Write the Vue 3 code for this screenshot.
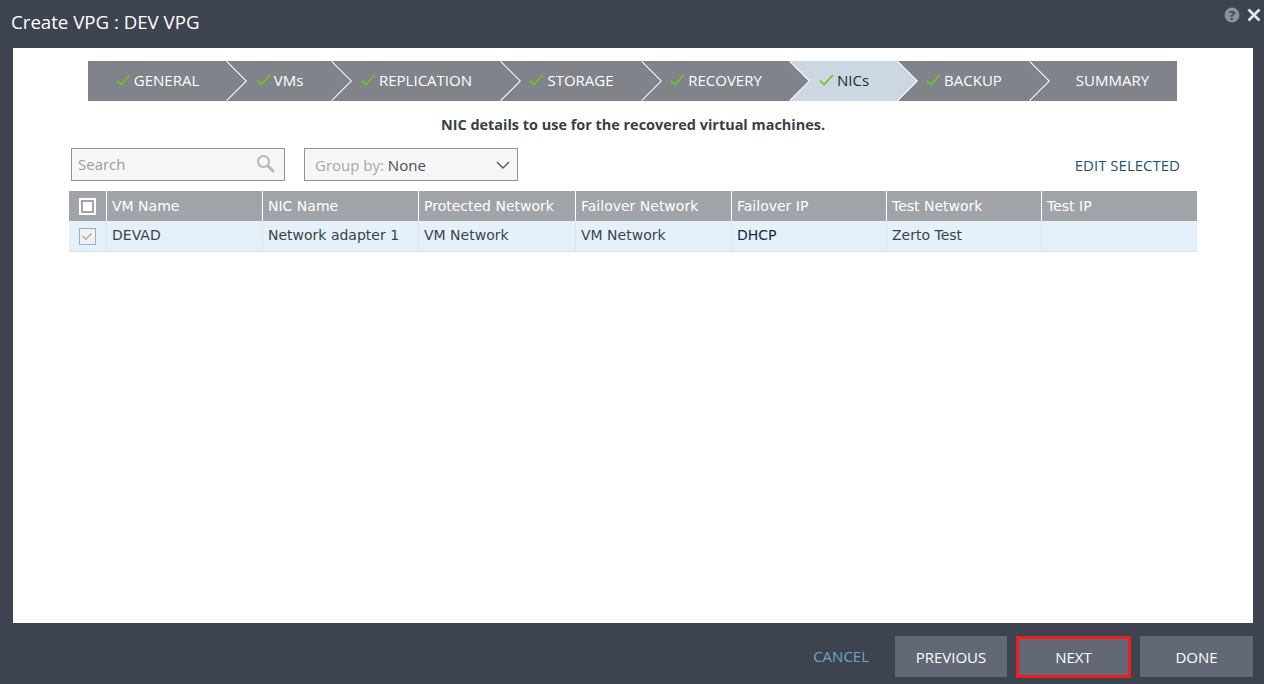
<script setup>
const steps = [
  { label: 'GENERAL', w: 139, done: true },
  { label: 'VMs', w: 105, done: true },
  { label: 'REPLICATION', w: 169, done: true },
  { label: 'STORAGE', w: 141, done: true },
  { label: 'RECOVERY', w: 148, done: true },
  { label: 'NICs', w: 108, done: true, active: true },
  { label: 'BACKUP', w: 132, done: true },
  { label: 'SUMMARY', w: 147, done: false, last: true }
]
const pts = (s, i) => {
  const w = s.w
  if (s.last) return `0,0 ${w},0 ${w},40 0,40 20,20`
  const left = i === 0 ? '0,40 0,0' : '0,40 20,20 0,0'
  return `${left} ${w},0 ${w + 20},20 ${w},40`
}
const cols = ['VM Name', 'NIC Name', 'Protected Network', 'Failover Network', 'Failover IP', 'Test Network', 'Test IP']
const row = ['DEVAD', 'Network adapter 1', 'VM Network', 'VM Network', 'DHCP', 'Zerto Test', '']
</script>

<template>
  <div class="dialog">
    <header class="titlebar">
      <h1 class="title">Create VPG : DEV VPG</h1>
      <div class="window-icons">
        <svg width="16" height="16" viewBox="0 0 16 16">
          <circle cx="8" cy="8" r="7.5" fill="#8b9099" />
          <text x="8" y="12.5" text-anchor="middle" class="q">?</text>
        </svg>
        <svg width="14" height="14" viewBox="0 0 14 14">
          <path d="M1.5 1.5 12.5 12.5M12.5 1.5 1.5 12.5" stroke="#e4e6e8" stroke-width="2.6" fill="none" />
        </svg>
      </div>
    </header>

    <main class="panel">
      <nav class="stepper">
        <div
          v-for="(s, i) in steps"
          :key="s.label"
          class="step"
          :class="{ active: s.active }"
          :style="{ width: s.w + 'px' }"
        >
          <svg class="shape" :width="s.w + 22" height="40" :viewBox="`0 0 ${s.w + 22} 40`">
            <polygon :points="pts(s, i)" :fill="s.active ? '#cbd8e3' : '#80838a'" />
            <polyline
              v-if="!s.last"
              :points="`${s.w},0 ${s.w + 20},20 ${s.w},40`"
              fill="none"
              stroke="#fff"
              stroke-width="2"
            />
          </svg>
          <span class="step-content">
            <svg class="check" :class="{ hidden: !s.done }" width="15" height="12" viewBox="0 0 15 12">
              <path d="M1 6.5 5 10.5 14 1" fill="none" stroke="#6fc520" stroke-width="1.7" />
            </svg>
            <span>{{ s.label }}</span>
          </span>
        </div>
      </nav>

      <p class="subtitle">NIC details to use for the recovered virtual machines.</p>

      <div class="toolbar">
        <div class="search">
          <span class="placeholder">Search</span>
          <svg width="19" height="19" viewBox="0 0 19 19">
            <circle cx="7.5" cy="7.5" r="5.5" fill="none" stroke="#b4b6b8" stroke-width="2" />
            <path d="M11.8 11.8 17 17" stroke="#b4b6b8" stroke-width="3" stroke-linecap="round" />
          </svg>
        </div>
        <div class="group">
          <span><span class="group-label">Group by:</span> None</span>
          <svg width="14" height="8" viewBox="0 0 14 8">
            <path d="M1 1 7 7 13 1" fill="none" stroke="#55585c" stroke-width="1.4" />
          </svg>
        </div>
        <a class="edit">EDIT SELECTED</a>
      </div>

      <div class="table">
        <div class="cell head check-cell"><span class="head-box"></span></div>
        <div v-for="c in cols" :key="c" class="cell head">{{ c }}</div>
        <div class="cell body check-cell">
          <span class="row-box">
            <svg width="12" height="9" viewBox="0 0 12 9">
              <path d="M1.5 4 5 7.2 10.5 1.5" fill="none" stroke="#a8acb0" stroke-width="1.5" />
            </svg>
          </span>
        </div>
        <div
          v-for="(c, i) in row"
          :key="i"
          class="cell body"
          :class="{ ip: c === 'DHCP' }"
        >{{ c }}</div>
      </div>
    </main>

    <footer class="footer">
      <a class="cancel">CANCEL</a>
      <button class="btn prev">PREVIOUS</button>
      <button class="btn next">NEXT</button>
      <button class="btn done">DONE</button>
    </footer>
  </div>
</template>

<style>
html, body { margin: 0; background: #3d4450; }
</style>

<style scoped>
.dialog {
  width: 1264px;
  height: 684px;
  background: #3d4450;
  display: flex;
  flex-direction: column;
  font-family: "Open Sans", "Noto Sans", sans-serif;
  overflow: hidden;
}
.titlebar {
  height: 48px;
  flex: none;
  display: flex;
  justify-content: space-between;
  align-items: flex-start;
  box-sizing: border-box;
  padding: 0 3px 0 11px;
}
.title {
  margin: 9px 0 0;
  font-size: 18.67px;
  line-height: 26px;
  font-weight: 400;
  color: #fff;
}
.window-icons {
  display: flex;
  align-items: center;
  gap: 7px;
  margin-top: 7px;
}
.q {
  font-family: "Open Sans", sans-serif;
  font-size: 13px;
  font-weight: 700;
  fill: #3d4450;
}
.panel {
  height: 575px;
  flex: none;
  margin: 0 11px 0 13px;
  background: #fff;
  box-sizing: border-box;
  padding-top: 13px;
}
.stepper {
  display: flex;
  margin-left: 75px;
  height: 40px;
}
.step {
  position: relative;
  height: 40px;
  flex: none;
  display: flex;
  align-items: center;
  justify-content: center;
  font-size: 15px;
  line-height: 20px;
  color: #fff;
}
.step.active { color: #1f2a36; }
.shape {
  position: absolute;
  left: 0;
  top: 0;
  z-index: 1;
}
.step-content {
  position: relative;
  z-index: 2;
  display: flex;
  align-items: center;
  gap: 3px;
  margin-top: -2px;
}
.check.hidden { visibility: hidden; }
.subtitle {
  margin: 14px 0 0;
  height: 20px;
  line-height: 20px;
  text-align: center;
  font-size: 14.45px;
  font-weight: 700;
  color: #3a3f45;
}
.toolbar {
  display: flex;
  align-items: center;
  margin: 13px 73px 0 58px;
  height: 33px;
  gap: 19px;
}
.search, .group {
  box-sizing: border-box;
  width: 214px;
  height: 33px;
  border: 1px solid #8e9398;
  background: #f6f6f6;
  display: flex;
  align-items: center;
  justify-content: space-between;
  font-size: 15px;
  line-height: 20px;
}
.search { padding: 0 9px 2px 6px; }
.placeholder { color: #9a9da0; }
.group { padding: 0 7px 0 10px; color: #4a4e53; }
.group-label { color: #a5a7aa; }
.edit {
  margin-left: auto;
  font-size: 15px;
  line-height: 20px;
  color: #1d4f82;
}
.table {
  display: grid;
  grid-template-columns: 38px 156px 156px 157px 156px 155px 155px 155px;
  margin: 10px 56px 0;
  font-family: "DejaVu Sans", Verdana, sans-serif;
  font-size: 14px;
}
.cell {
  box-sizing: border-box;
  height: 30px;
  display: flex;
  align-items: center;
  padding-left: 5px;
  white-space: nowrap;
  overflow: hidden;
}
.head {
  background: #a0a3a7;
  color: #fff;
  border-right: 1px solid #fff;
}
.head:nth-child(8) { border-right: 0; }
.body {
  background: #e4f1fa;
  color: #3d4247;
  border-right: 1px solid #dde3e8;
  border-bottom: 1px solid #d8e0e6;
  height: 31px;
  padding-bottom: 2px;
}
.body:last-child { border-right: 0; }
.ip { color: #0f2a4a; }
.check-cell { justify-content: center; padding: 0 1px 0 0; }
.head-box {
  box-sizing: border-box;
  width: 17px;
  height: 17px;
  border: 2px solid #fff;
  background: #a0a3a7;
  display: flex;
  align-items: center;
  justify-content: center;
}
.head-box::after {
  content: "";
  width: 9px;
  height: 9px;
  background: #fff;
}
.row-box {
  box-sizing: border-box;
  width: 17px;
  height: 17px;
  border: 1px solid #a8acb0;
  background: #edf1f4;
  display: flex;
  align-items: center;
  justify-content: center;
}
.footer {
  flex: 1;
  display: flex;
  align-items: flex-start;
  padding: 13px 11px 0 0;
  justify-content: flex-end;
}
.cancel {
  font-size: 15px;
  color: #6fa3c4;
  line-height: 41px;
  margin-right: 26px;
}
.btn {
  height: 41px;
  border: 0;
  background: #626875;
  color: #fff;
  font-family: inherit;
  font-size: 15px;
  padding: 0;
}
.prev { width: 112px; margin-right: 9px; }
.next { width: 115px; height: 42px; margin-right: 9px; border: 3px solid #ee1c1c; box-sizing: border-box; }
.done { width: 113px; }
</style>
